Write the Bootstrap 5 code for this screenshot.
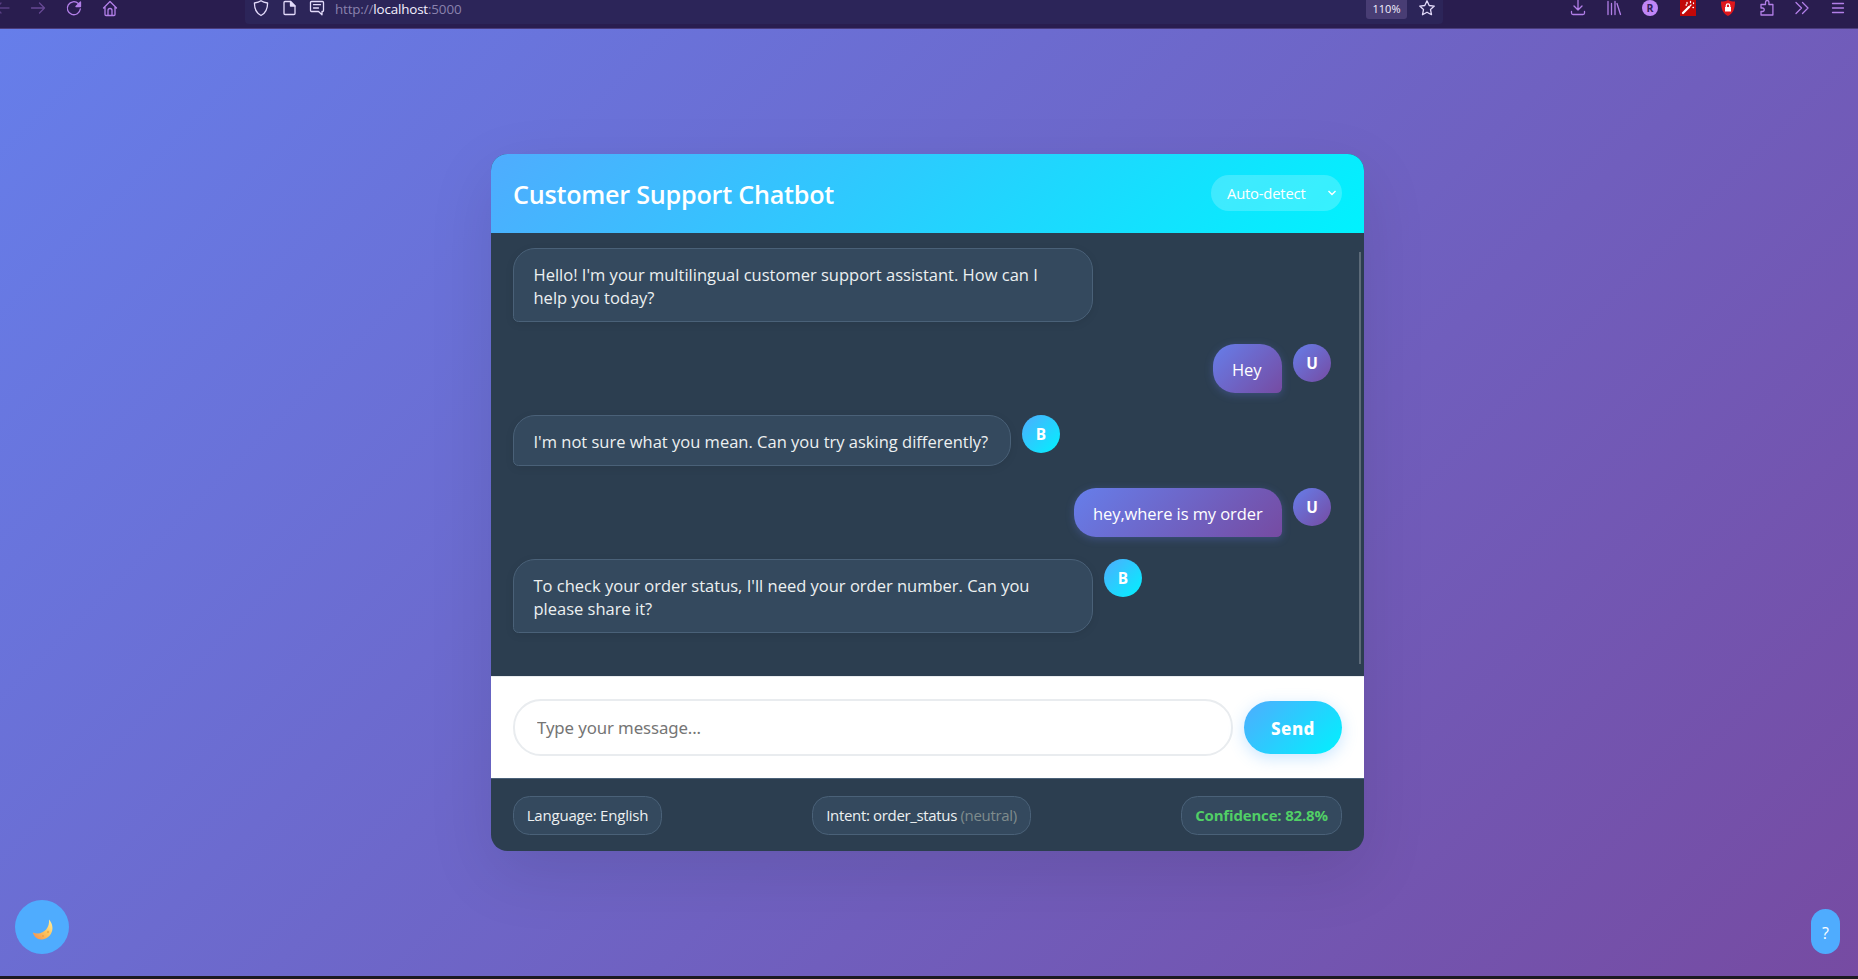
<!DOCTYPE html>
<html lang="en">
<head>
<meta charset="utf-8">
<title>Customer Support Chatbot</title>
<link href="https://cdn.jsdelivr.net/npm/bootstrap@5.3.0/dist/css/bootstrap.min.css" rel="stylesheet">
<style>
  body { font-family: "Open Sans", "Noto Sans", sans-serif; overflow: hidden; background: #1d1a22; }
  svg { display: block; flex: none; overflow: visible; }
  .toolbar { height: 29px; background: #291d4f; border-bottom: 1px solid #4a3c7c; color: #b27fe8; }
  .tool-strip { height: 16px; }
  .tool-strip svg, .address svg { width: 16px; height: 16px; fill: none; stroke: currentColor; stroke-width: 1.3; stroke-linecap: round; stroke-linejoin: round; }
  .nav-tools { width: 245px; gap: 20px; margin-left: -6px; margin-right: 6px; }
  .address { width: 1198px; height: 24px; background: #2c2559; border-radius: 0 0 4px 4px; color: #e3dbfa; padding-left: 8px; padding-right: 8px; }
  .page-icon { margin-left: 12px; margin-right: 12px; }
  .url-text { font-size: 13.4px; line-height: 18px; color: #8a82ad; white-space: nowrap; letter-spacing: -.15px; margin-left: 10px; }
  .url-text b { font-weight: 400; color: #f5f1ff; }
  .zoom-tag { width: 41px; height: 19px; background: #483d74; border-radius: 0 0 3px 3px; font-size: 11px; line-height: 18px; color: #f5f1ff; margin-right: 12px; }
  .ext-tools { margin-left: 127px; }
  .ext-tools svg:nth-child(2) { margin-left: 20px; }
  .ext-tools svg:nth-child(3) { margin-left: 20px; }
  .ext-tools svg:nth-child(4) { margin-left: 22px; }
  .ext-tools svg:nth-child(5) { margin-left: 24px; }
  .ext-tools svg:nth-child(6) { margin-left: 23px; }
  .ext-tools svg:nth-child(7) { margin-left: 19px; }
  .ext-tools svg:nth-child(8) { margin-left: 20px; }

  .stage { height: 947px; background: linear-gradient(135deg, #667eea 0%, #764ba2 100%); padding-top: 125px; padding-left: 491px; }
  .chat { width: 873px; height: 697px; border-radius: 16.5px; box-shadow: 0 22px 66px rgba(0,0,0,.1); background: #2c3e50; }
  .chat-head { height: 79px; padding: 0 22px; background: linear-gradient(135deg, #4facfe 0%, #00f2fe 100%); }
  .chat-head h1 { font-size: 25.2px; font-weight: 600; color: #fff; line-height: 36px; letter-spacing: -.25px; }
  .lang { width: 131px; height: 36px; margin-bottom: 1px; border-radius: 18px; background: rgba(255,255,255,.2); color: #fff; padding: 0 6px 0 16px; font-size: 14.8px; letter-spacing: -.2px; }
  .log { height: 443px; padding: 15px 33px 0 22px; gap: 22px; }
  .scroll-track { top: 19px; right: 3px; width: 2px; height: 412px; background: #5d6b79; }
  .msg { gap: 11px; }
  .bubble { font-size: 16.5px; line-height: 23px; padding: 14px 19px 12px; border-radius: 22px; white-space: nowrap; }
  .bubble.bot { background: #34495e; border: 1px solid #4a6178; color: #ecf0f1; border-bottom-left-radius: 5.5px; box-shadow: 0 2px 9px rgba(0,0,0,.08); padding-left: 19.5px; }
  .bubble.user { background: linear-gradient(135deg, #667eea 0%, #764ba2 100%); color: #fff; border-bottom-right-radius: 5.5px; box-shadow: 0 2px 9px rgba(102,126,234,.3); letter-spacing: -.08px; }
  .avatar { width: 38px; height: 38px; flex: none; color: #fff; font-weight: 700; font-size: 15.4px; padding-top: 2px; }
  .avatar.bot { background: linear-gradient(135deg, #4facfe 0%, #00f2fe 100%); }
  .avatar.user { background: linear-gradient(135deg, #667eea 0%, #764ba2 100%); }
  .w-full-bubble { width: 580px; } .w-mid { width: 498px; } .w-hey { width: 69px; } .w-order { width: 208px; }

  .composer { height: 102px; background: #fff; border-top: 1px solid #e9ecef; padding: 22px; gap: 11px; }
  .composer input { width: 720px; height: 57px; border: 2px solid #e9ecef; border-radius: 28px; padding: 0 22px; font-family: "Noto Sans", sans-serif; font-size: 16.8px; color: #333; outline: 0; letter-spacing: -.1px; }
  .composer input::placeholder { color: #757575; opacity: 1; }
  .send { width: 98px; height: 53px; border: 0; border-radius: 27px; color: #fff; font-family: "Noto Sans", sans-serif; font-size: 17px; font-weight: 800; letter-spacing: .5px; background: linear-gradient(135deg, #4facfe 0%, #00f2fe 100%); box-shadow: 0 4px 16px rgba(79,172,254,.3); padding: 2px 0 0; }
  .status { height: 73px; border-top: 1px solid #4a6178; padding: 17px 22px; color: #ecf0f1; }
  .chip { height: 39px; border-radius: 16.5px; background: #34495e; border: 1px solid #4a6178; font-size: 15px; white-space: nowrap; }
  .chip-a { width: 149px; letter-spacing: -.2px; } .chip-b { width: 219px; letter-spacing: -.34px; } .chip-c { width: 161px; color: #51cf66; font-weight: 700; letter-spacing: -.17px; }
  .chip span { color: #7f8c8d; }
  .theme-btn { left: 15px; bottom: 22px; width: 54px; height: 54px; padding: 3px 0 0 2px; background: #4facfe; }
  .help-btn { right: 18px; bottom: 22px; width: 29px; height: 45px; border-radius: 15px; background: #4facfe; color: #fff; font-size: 16px; padding-top: 2px; }
</style>
</head>
<body>
<header class="toolbar d-flex align-items-start">
  <div class="nav-tools tool-strip d-flex">
    <svg viewBox="0 0 16 16" opacity=".35"><path d="M15 8H2M7 3 2 8l5 5"/></svg>
    <svg viewBox="0 0 16 16" opacity=".45"><path d="M1.500 8h13M9.500 3l5 5-5 5"/></svg>
    <svg viewBox="0 0 16 16"><path d="M14.300 9a6.500 6.500 0 1 1-2-5.500"/><path d="M14.500 2v4.500H10z" fill="currentColor"/></svg>
    <svg viewBox="0 0 16 16"><path d="M1.500 8 8 1.500 14.500 8M3 7v7.500a1 1 0 0 0 1 1h8a1 1 0 0 0 1-1V7M6 15v-4.500a2 2 0 0 1 4 0V15"/></svg>
  </div>
  <div class="address d-flex align-items-start">
    <svg viewBox="0 0 16 16"><path d="M8 .7c2 1.500 4.300 2 6.600 2.300C14.600 9 12 13.500 8 15.500 4 13.500 1.400 9 1.400 3 3.700 2.700 6 2.200 8 .7z"/></svg>
    <svg viewBox="0 0 16 16" class="page-icon"><path d="M4 1.500h5.500L14 6v7.500a1 1 0 0 1-1 1H4a1 1 0 0 1-1-1v-11a1 1 0 0 1 1-1z"/><path d="M9.500 1.500V6H14z" fill="currentColor"/></svg>
    <svg viewBox="0 0 16 16"><path d="M2.500 1.500h11a1 1 0 0 1 1 1v8a1 1 0 0 1-1 1H13v3.300l-3.500-3.300h-7a1 1 0 0 1-1-1v-8a1 1 0 0 1 1-1zM4.500 4.700h7M4.500 8h5"/></svg>
    <span class="url-text">http://<b>localhost</b>:5000</span>
    <span class="zoom-tag ms-auto text-center">110%</span>
    <svg viewBox="0 0 16 16"><path d="m8 .8 2.200 4.700 5.100.6-3.800 3.500 1 5.100L8 12.200l-4.500 2.500 1-5.100L.7 6.100l5.100-.6z"/></svg>
  </div>
  <div class="ext-tools tool-strip d-flex">
    <svg viewBox="0 0 16 16"><path d="M8 0v10M4 6l4 4 4-4M1.500 11.500V13a1.500 1.500 0 0 0 1.500 1.500h10a1.500 1.500 0 0 0 1.500-1.500v-1.500"/></svg>
    <svg viewBox="0 0 16 16"><path d="M2 1.500v13M5.500 3.500v11M9 1.500v13M11 3.500l3.500 11"/></svg>
    <svg viewBox="0 0 16 16"><circle cx="8" cy="8" r="8" fill="#c086f7" stroke="none"/><text x="8" y="12" text-anchor="middle" font-size="10.500" font-weight="700" fill="#32215b" stroke="none">R</text></svg>
    <svg viewBox="0 0 16 16"><path d="M0 0h16v16H0z" fill="#c20808" stroke="none"/><path d="m3 13 6-6" stroke="#fff" stroke-width="2.300"/><path d="m10 6 1-1M7 2.500v1M10.500 1.500v1M13.500 3v.5M13 7.500h.5M6 5h.5" stroke="#fff"/></svg>
    <svg viewBox="0 0 16 16"><path d="M8 0c2 1 4.500 1.500 7 1.500C15 9 13 13.500 8 16 3 13.500 1 9 1 1.500 3.500 1.500 6 1 8 0z" fill="#df171c" stroke="none"/><path d="M5 7h6v4.500H5z" fill="#fff" stroke="none"/><path d="M6.300 7V5.500a1.700 1.700 0 0 1 3.400 0V7" stroke="#fff"/></svg>
    <svg viewBox="0 0 16 16"><path d="M2 8V4.500h4.500V2.200a1.700 1.700 0 0 1 3.400 0v2.300h4V15H2v-3.500h1.500a1.750 1.750 0 0 0 0-3.500z"/></svg>
    <svg viewBox="0 0 16 16"><path d="m2 2.500 5.500 5.500L2 13.500M8.500 2.500 14 8l-5.500 5.500"/></svg>
    <svg viewBox="0 0 16 16"><path d="M2.500 3.500h11M2.500 8h11M2.500 12.500h11"/></svg>
  </div>
</header>

<main class="stage position-relative">
  <section class="chat d-flex flex-column overflow-hidden">
    <div class="chat-head d-flex align-items-center justify-content-between">
      <h1 class="m-0">Customer Support Chatbot</h1>
      <div class="lang d-flex align-items-center justify-content-between">Auto-detect
        <svg width="8" height="6" viewBox="0 0 8 6" fill="none" stroke="#fff" stroke-width="1.400"><path d="m.5 1 3.500 3.500L7.500 1"/></svg>
      </div>
    </div>
    <div class="log d-flex flex-column position-relative">
      <div class="msg d-flex align-items-start"><div class="bubble bot w-full-bubble">Hello! I'm your multilingual customer support assistant. How can I<br>help you today?</div></div>
      <div class="msg d-flex align-items-start justify-content-end"><div class="bubble user w-hey">Hey</div><div class="avatar user rounded-circle d-flex align-items-center justify-content-center">U</div></div>
      <div class="msg d-flex align-items-start"><div class="bubble bot w-mid">I'm not sure what you mean. Can you try asking differently?</div><div class="avatar bot rounded-circle d-flex align-items-center justify-content-center">B</div></div>
      <div class="msg d-flex align-items-start justify-content-end"><div class="bubble user w-order">hey,where is my order</div><div class="avatar user rounded-circle d-flex align-items-center justify-content-center">U</div></div>
      <div class="msg d-flex align-items-start"><div class="bubble bot w-full-bubble">To check your order status, I'll need your order number. Can you<br>please share it?</div><div class="avatar bot rounded-circle d-flex align-items-center justify-content-center">B</div></div>
      <div class="scroll-track position-absolute"></div>
    </div>
    <div class="composer d-flex align-items-center">
      <input type="text" placeholder="Type your message...">
      <button class="send" type="button">Send</button>
    </div>
    <div class="status d-flex justify-content-between">
      <div class="chip chip-a d-flex align-items-center justify-content-center">Language: English</div>
      <div class="chip chip-b d-flex align-items-center justify-content-center">Intent: order_status&nbsp;<span>(neutral)</span></div>
      <div class="chip chip-c d-flex align-items-center justify-content-center">Confidence: 82.8%</div>
    </div>
  </section>
  <div class="theme-btn rounded-circle position-absolute d-flex align-items-center justify-content-center">
    <svg width="22" height="22" viewBox="0 0 22 22"><defs><linearGradient id="moon" x1="0" y1="1" x2="1" y2="0"><stop offset="0" stop-color="#f28b50"/><stop offset=".5" stop-color="#fcc35c"/><stop offset="1" stop-color="#fff0a0"/></linearGradient></defs><path d="M17 1.500C25 11 18 21.500 9 21.500 5 21.500 2 18.500 .8 14.500 10 18 18 11 17 1.500z" fill="url(#moon)"/><circle cx="11" cy="18" r="1" fill="#eda044"/><circle cx="16" cy="14" r="1.200" fill="#f2ae48"/></svg>
  </div>
  <div class="help-btn position-absolute d-flex align-items-center justify-content-center">?</div>
</main>
<script src="https://cdn.jsdelivr.net/npm/bootstrap@5.3.0/dist/js/bootstrap.bundle.min.js"></script>
</body>
</html>
